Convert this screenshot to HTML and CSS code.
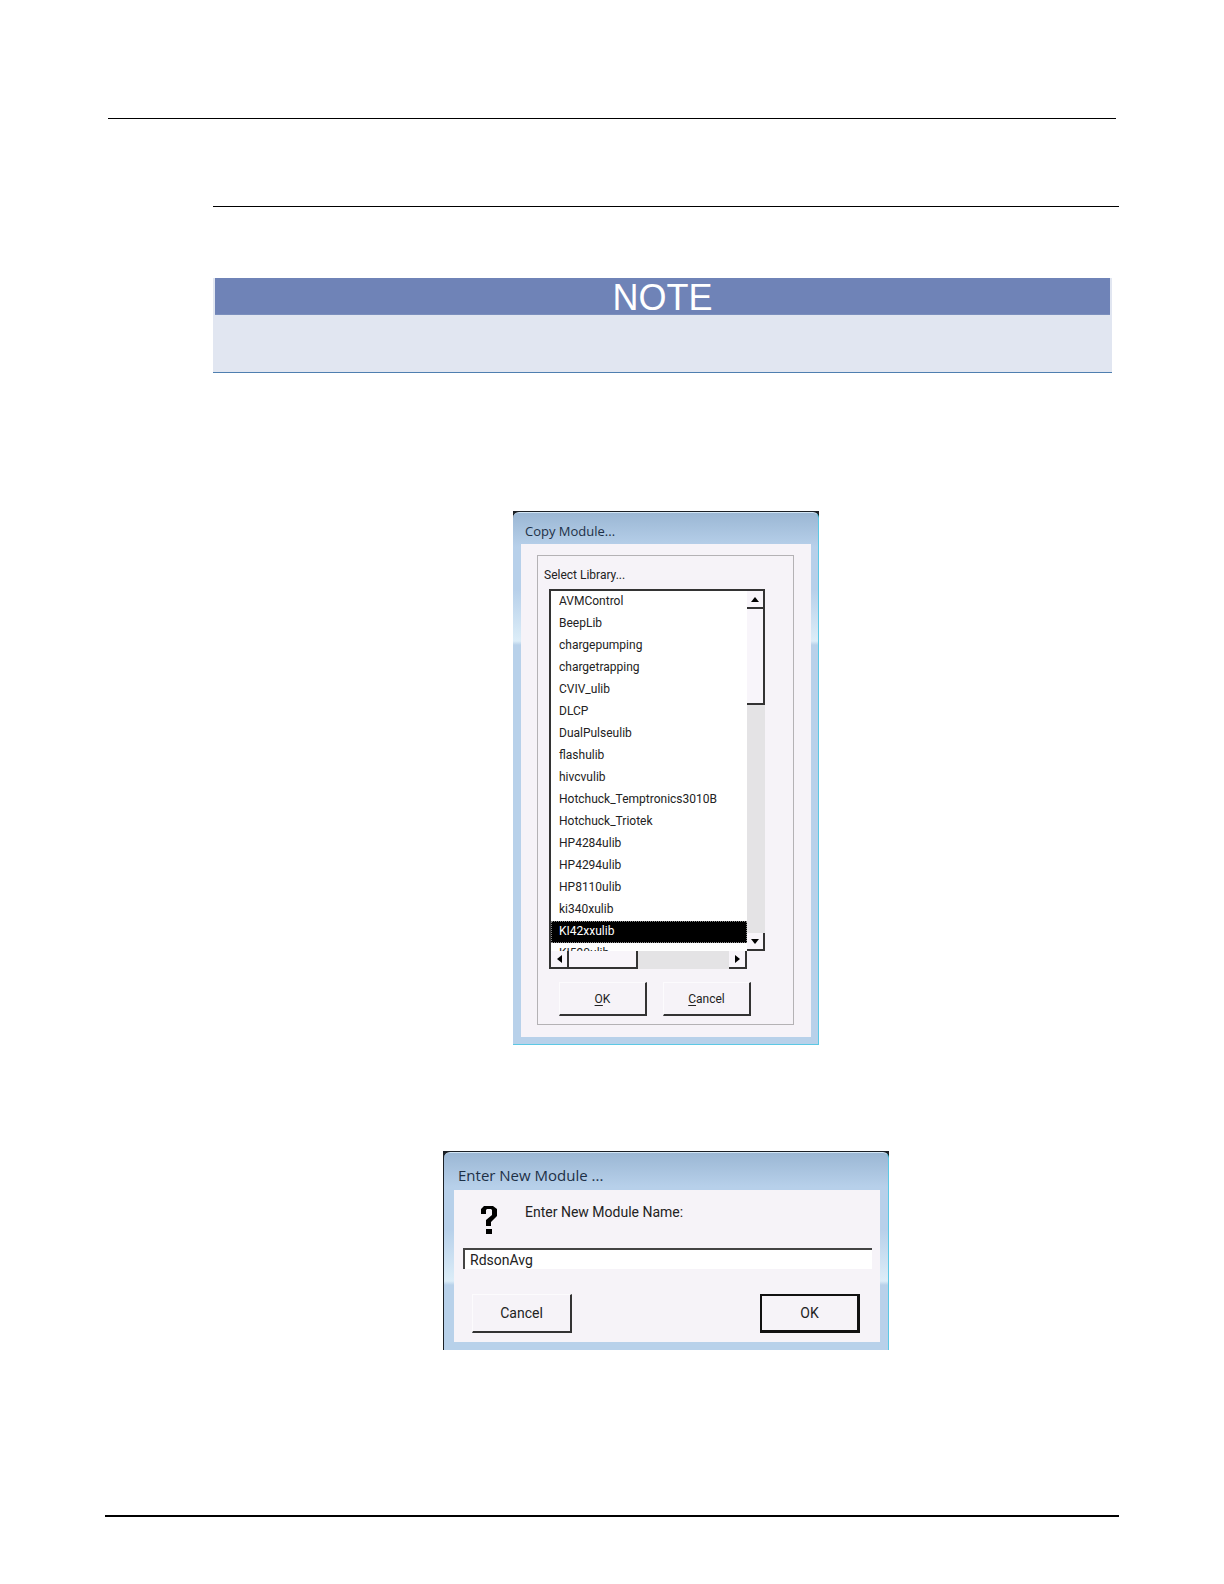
FILE: index.html
```html
<!DOCTYPE html>
<html lang="en">
<head>
  <meta charset="UTF-8" />
  <meta name="viewport" content="width=device-width, initial-scale=1.0" />
  <title>Copy Module</title>
  <link rel="stylesheet" href="styles.css">
</head>
<body>
  <header class="page-header"></header>

  <main class="content">
    <hr class="section-rule">

    <section class="note">
      <h2 class="note-title">NOTE</h2>
      <div class="note-body"></div>
    </section>

    <div class="backdrop copy-backdrop">
      <form class="dialog copy-dialog">
        <h3 class="dialog-title">Copy Module...</h3>
        <div class="client">
          <div class="group">
            <label class="group-label" for="library">Select Library...</label>
            <div class="listbox">
              <select class="list" id="library" size="16">
                <option>AVMControl</option>
                <option>BeepLib</option>
                <option>chargepumping</option>
                <option>chargetrapping</option>
                <option>CVIV_ulib</option>
                <option>DLCP</option>
                <option>DualPulseulib</option>
                <option>flashulib</option>
                <option>hivcvulib</option>
                <option>Hotchuck_Temptronics3010B</option>
                <option>Hotchuck_Triotek</option>
                <option>HP4284ulib</option>
                <option>HP4294ulib</option>
                <option>HP8110ulib</option>
                <option>ki340xulib</option>
                <option selected>KI42xxulib</option>
                <option>KI590ulib</option>
              </select>
              <div class="scroll-v">
                <button type="button" class="arrow" aria-label="Scroll up">
                  <svg width="8" height="5" viewBox="0 0 8 5"><path d="M0 5L4 0L8 5Z"/></svg>
                </button>
                <div class="thumb"></div>
                <div class="track"></div>
                <button type="button" class="arrow" aria-label="Scroll down">
                  <svg width="8" height="5" viewBox="0 0 8 5"><path d="M0 0L4 5L8 0Z"/></svg>
                </button>
              </div>
              <div class="scroll-h">
                <button type="button" class="arrow" aria-label="Scroll left">
                  <svg width="5" height="8" viewBox="0 0 5 8"><path d="M5 0L0 4L5 8Z"/></svg>
                </button>
                <div class="thumb"></div>
                <div class="track"></div>
                <button type="button" class="arrow" aria-label="Scroll right">
                  <svg width="5" height="8" viewBox="0 0 5 8"><path d="M0 0L5 4L0 8Z"/></svg>
                </button>
              </div>
            </div>
            <div class="actions">
              <button type="button" class="btn"><u>O</u>K</button>
              <button type="button" class="btn"><u>C</u>ancel</button>
            </div>
          </div>
        </div>
      </form>
    </div>

    <div class="backdrop name-backdrop">
      <form class="dialog name-dialog">
        <h3 class="dialog-title">Enter New Module ...</h3>
        <div class="client">
          <div class="prompt">
            <svg class="question" width="18" height="30" viewBox="0 0 18 30">
              <path d="M1 9V4L4 1H13L17 4V11L11 17V21H6V15L12 10V5L11 4H7L6 5V9Z"/>
              <rect x="6" y="24" width="6" height="5"/>
            </svg>
            <label for="module-name">Enter New Module Name:</label>
          </div>
          <input type="text" class="name-input" id="module-name" value="RdsonAvg">
          <div class="actions">
            <button type="button" class="btn">Cancel</button>
            <button type="button" class="btn btn-default">OK</button>
          </div>
        </div>
      </form>
    </div>
  </main>

  <footer class="page-footer"></footer>
</body>
</html>
```
FILE: styles.css
```css
* {
  margin: 0;
  padding: 0;
  box-sizing: border-box;
}

body {
  display: flex;
  flex-direction: column;
  min-height: 100vh;
  background: #fff;
  color: #222;
  font-family: Roboto, "Liberation Sans", sans-serif;
  font-size: 12px;
}

.page-header {
  margin: 0 108px;
  padding-top: 118px;
  border-bottom: 1px solid #000;
}

.page-footer {
  margin: auto 105px 67px;
  border-top: 2px solid #000;
}

.content {
  display: flex;
  flex-direction: column;
  align-items: center;
  padding: 87px 105px 0 213px;
}

.section-rule {
  width: 100%;
  border: none;
  border-top: 1px solid #000;
}

/* note box */
.note {
  align-self: stretch;
  margin: 71px 7px 0 0;
  background: #e1e6f1;
  border-bottom: 1px solid #4f7fb0;
}

.note-title {
  margin: 0 2px;
  height: 37px;
  line-height: 40px;
  background: #6f83b7;
  border-bottom: 1px solid #7b8fbd;
  color: #fff;
  font-family: "Liberation Sans", sans-serif;
  font-size: 36px;
  font-weight: normal;
  text-align: center;
}

.note-body {
  height: 57px;
}

/* window frames */
.backdrop {
  max-width: 100%;
  background: linear-gradient(#1b2026 12px, #b8d1ea 12px);
}

.copy-backdrop {
  width: 306px;
  margin-top: 138px;
}

.name-backdrop {
  width: 446px;
  margin-top: 106px;
  border-left: 1px solid #1b2026;
}

.dialog {
  border-top: 1px solid #d3e6f5;
  border-right: 1px solid #5cc8e4;
  border-radius: 6px 6px 0 0;
  margin-top: 1px;
  background: linear-gradient(#9bb7d4, #b7d0ea 34px, #b7d0ea 76px, #dcedf8 128px, #b8d1ea 132px);
}

.copy-dialog {
  padding: 0 7px 7px 8px;
  border-bottom: 1px solid #5cc8e4;
}

.name-dialog {
  padding: 0 8px 8px 10px;
  font-size: 14px;
}

.dialog-title {
  height: 31px;
  padding: 5px 0 0 4px;
  color: #1d3047;
  font-family: "Open Sans", "Noto Sans", sans-serif;
  font-size: 13px;
  font-weight: normal;
  line-height: 26px;
}

.client {
  background: #f6f3f8;
}

/* copy dialog */
.copy-dialog .client {
  padding: 11px 17px 12px 16px;
}

.group {
  border: 1px solid #b4b2b5;
  padding: 9px 11px 8px;
}

.group-label {
  display: block;
  margin-left: -5px;
  line-height: 20px;
  margin-bottom: 4px;
}

.listbox {
  display: grid;
  grid-template-columns: 198px 18px;
  grid-template-rows: 362px 18px;
}

.list {
  width: 100%;
  height: 100%;
  border: solid #333;
  border-width: 2px 0 0 2px;
  border-radius: 0;
  background: #fff;
  color: #222;
  font: inherit;
  overflow: hidden;
  scrollbar-width: none;
  outline: none;
}

.list option {
  height: 22px;
  min-height: 22px;
  padding: 3px 8px 0;
}

.list option:checked {
  background: #000 linear-gradient(#000, #000);
  -webkit-text-fill-color: #fff;
  outline: 1px dotted #888;
  outline-offset: -1px;
}

.scroll-v,
.scroll-h {
  display: flex;
  background: #e4e3e5;
}

.scroll-v {
  flex-direction: column;
  border-top: 2px solid #333;
}

.scroll-h {
  border-left: 2px solid #333;
}

.arrow,
.thumb {
  flex: none;
  background: #f8f5fa;
  border: solid #333;
  border-width: 0 2px 2px 0;
}

.arrow {
  display: flex;
  align-items: center;
  justify-content: center;
  width: 18px;
  height: 18px;
}

.scroll-v .thumb {
  height: 96px;
}

.scroll-h .thumb {
  width: 69px;
}

.track {
  flex: 1;
}

.actions {
  display: flex;
}

.btn {
  background: #f6f3f8;
  border: solid;
  border-width: 1px 2px 2px 1px;
  border-color: #fcfbfd #333 #333 #fcfbfd;
  color: #222;
  font: inherit;
}

.copy-dialog .actions {
  gap: 16px;
  margin: 13px 0 0 10px;
}

.copy-dialog .btn {
  width: 88px;
  height: 34px;
}

u {
  text-underline-offset: 2px;
}

/* name dialog */
.name-dialog .client {
  padding: 12px 8px 9px 9px;
}

.name-dialog .dialog-title {
  height: 37px;
  padding-top: 9px;
  font-size: 15px;
}

.prompt {
  display: flex;
  gap: 27px;
  padding: 3px 0 0 17px;
}

.prompt label {
  line-height: 14px;
}

.name-input {
  display: block;
  width: 100%;
  height: 21px;
  margin-top: 13px;
  padding-left: 5px;
  border: solid #444;
  border-width: 2px 0 0 2px;
  background: #fff;
  color: #222;
  font: inherit;
}

.name-dialog .actions {
  justify-content: space-between;
  margin-top: 25px;
  padding: 0 12px 0 9px;
}

.name-dialog .btn {
  width: 100px;
  height: 39px;
}

.name-dialog .btn-default {
  border-color: #111;
  border-width: 2px 3px 3px 2px;
}
```
